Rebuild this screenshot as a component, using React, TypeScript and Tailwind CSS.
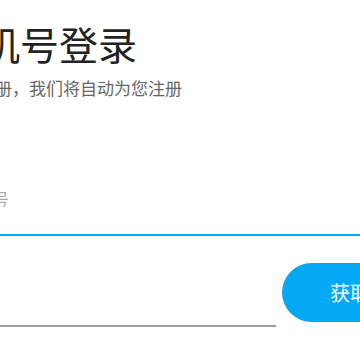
import React, { useState } from 'react';

export default function App() {
  const [phone, setPhone] = useState('');
  const [code, setCode] = useState('');

  return (
    <div className="w-[360px] h-[360px] overflow-hidden bg-white font-['Noto_Sans_CJK_SC','Noto_Sans',sans-serif]">
      {/* page is cropped: content begins left of the viewport */}
      <div className="ml-[-58px] w-[536px] pt-[24px] flex flex-col">
        <h1 className="text-[39px] leading-[39px] font-normal text-[#222222]">手机号登录</h1>
        <p className="mt-[16px] ml-[2px] text-[17px] leading-[17px] text-[#666666]">
          若未注册，我们将自动为您注册
        </p>

        <div className="mt-[94px] pb-[27px] border-b-2 border-[#03a9f4]">
          <input
            value={phone}
            onChange={(e) => setPhone(e.target.value)}
            placeholder="手机号"
            className="block w-full h-[17px] pl-[16px] text-[17px] leading-[17px] text-[#222222] placeholder:text-[#aaaaaa] outline-none"
          />
        </div>

        <div className="mt-[27px] flex items-end gap-[6px]">
          <div className="flex-1 pb-[25px] border-b-2 border-[#9e9e9e]">
            <input
              value={code}
              onChange={(e) => setCode(e.target.value)}
              placeholder="验证码"
              className="block w-full h-[17px] text-[17px] leading-[17px] text-[#222222] placeholder:text-[#aaaaaa] outline-none"
            />
          </div>
          <button className="mb-[5px] h-[59px] w-[196px] shrink-0 rounded-full bg-[#03a9f4] text-white text-[20px] leading-[20px]">
            获取验证码
          </button>
        </div>
      </div>
    </div>
  );
}
